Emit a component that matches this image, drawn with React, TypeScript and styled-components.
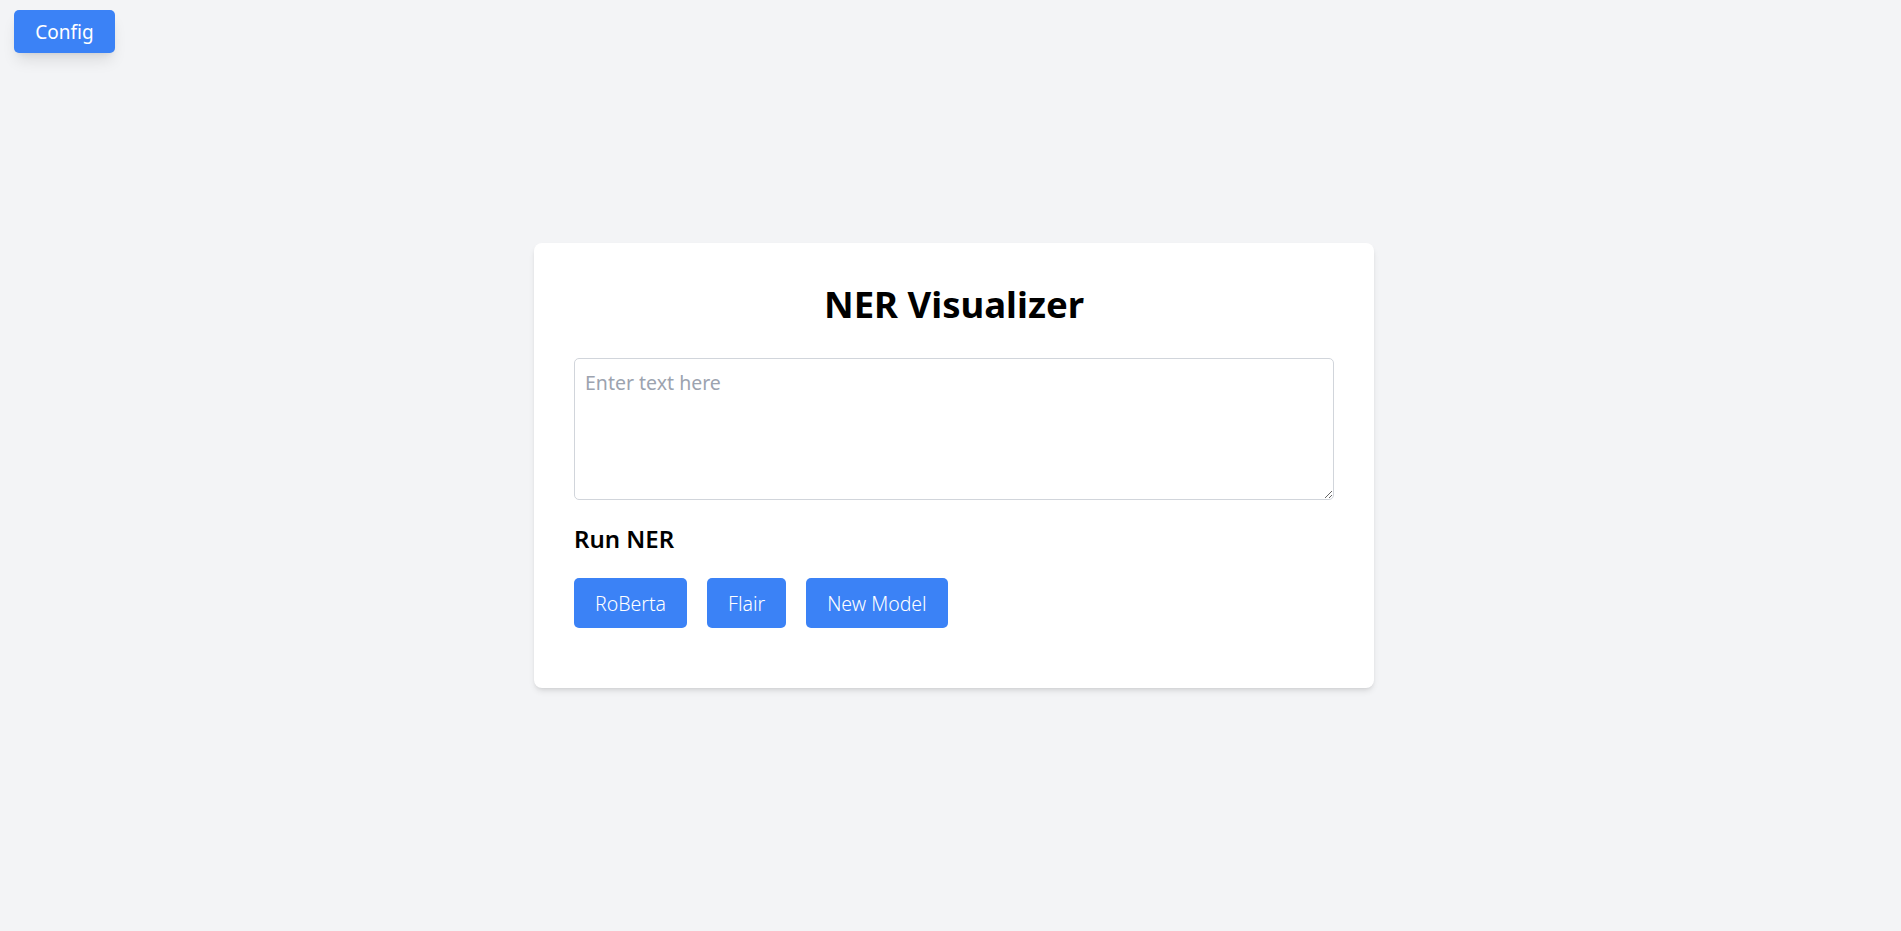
import React from "react";
import styled, { createGlobalStyle } from "styled-components";

const Global = createGlobalStyle`
  * { box-sizing: border-box; }
  html, body { margin: 0; padding: 0; background: #f3f4f6; }
  body { font-family: "Noto Sans", "Open Sans", sans-serif; color: #000; }
`;

const Page = styled.div`
  position: relative;
  min-height: 931px;
  display: flex;
  align-items: center;
  justify-content: center;
  padding-left: 7px;
`;

const ConfigButton = styled.button`
  position: absolute;
  top: 10px;
  left: 14px;
  width: 101px;
  height: 43px;
  border: none;
  border-radius: 5px;
  background: #3b82f6;
  color: #fff;
  font-family: inherit;
  font-size: 19px;
  box-shadow: 0 10px 15px -3px rgba(0, 0, 0, 0.1), 0 4px 6px -4px rgba(0, 0, 0, 0.1);
  cursor: pointer;
`;

const Card = styled.div`
  width: 840px;
  background: #fff;
  border-radius: 8px;
  padding: 40px 40px 60px;
  box-shadow: 0 4px 6px -1px rgba(0, 0, 0, 0.1), 0 2px 4px -2px rgba(0, 0, 0, 0.1);
`;

const Title = styled.h1`
  margin: 0 0 33px;
  text-align: center;
  font-size: 36.5px;
  line-height: 42px;
  font-weight: 700;
`;

const TextArea = styled.textarea`
  display: block;
  width: 760px;
  height: 142px;
  padding: 10px 10px;
  border: 1px solid #d1d5db;
  border-radius: 5px;
  font-family: inherit;
  font-size: 19.5px;
  line-height: 28px;
  resize: vertical;
  outline: none;
  &::placeholder { color: #9ca3af; }
`;

const SectionTitle = styled.h2`
  margin: 23px 0 0;
  font-size: 24px;
  line-height: 32px;
  font-weight: 600;
`;

const ButtonRow = styled.div`
  display: flex;
  gap: 20px;
  margin-top: 23px;
`;

const ModelButton = styled.button`
  height: 50px;
  padding: 0 21px;
  border: none;
  border-radius: 5px;
  background: #3b82f6;
  color: #fff;
  font-family: inherit;
  font-size: 19.5px;
  font-weight: 300;
  cursor: pointer;
`;

export default function App() {
  return (
    <>
      <Global />
      <Page>
        <ConfigButton>Config</ConfigButton>
        <Card>
          <Title>NER Visualizer</Title>
          <TextArea placeholder="Enter text here" />
          <SectionTitle>Run NER</SectionTitle>
          <ButtonRow>
            <ModelButton>RoBerta</ModelButton>
            <ModelButton>Flair</ModelButton>
            <ModelButton>New Model</ModelButton>
          </ButtonRow>
        </Card>
      </Page>
    </>
  );
}
